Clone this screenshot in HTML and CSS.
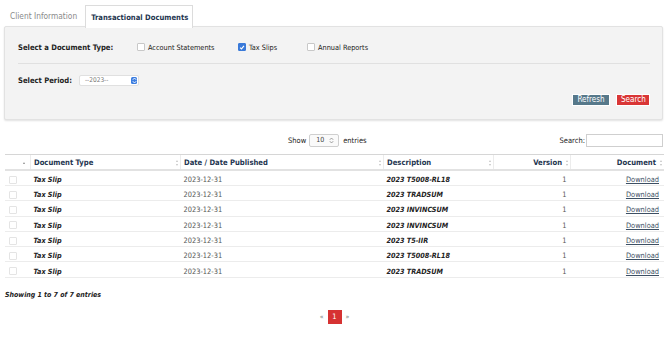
FILE: index.html
```html
<!DOCTYPE html>
<html lang="en">
<head>
    <meta charset="UTF-8">
    <title>Transactional Documents</title>
    <link rel="stylesheet" href="styles.css">
</head>
<body>
    <div class="tabs">
        <div class="tab">Client Information</div>
        <div class="tab active">Transactional Documents</div>
    </div>

    <div class="panel">
        <div class="panel-row">
            <span class="field-label">Select a Document Type:</span>
            <label class="opt opt-first"><span class="box"></span>Account Statements</label>
            <label class="opt opt-tax"><span class="box checked"><svg width="7" height="7" viewBox="0 0 7 7"><path d="M1.3 3.6 L2.9 5.2 L5.8 1.6" fill="none" stroke="#fff" stroke-width="1.3"/></svg></span>Tax Slips</label>
            <label class="opt"><span class="box"></span>Annual Reports</label>
        </div>
        <div class="sep"></div>
        <div class="panel-row">
            <span class="field-label period">Select Period:</span>
            <div class="period-select">--2023--<span class="stepper"><svg width="5" height="7" viewBox="0 0 5 7"><path d="M0.8 2.8 L2.5 1 L4.2 2.8 M0.8 4.2 L2.5 6 L4.2 4.2" fill="none" stroke="#fff" stroke-width="0.9"/></svg></span></div>
        </div>
        <div class="actions">
            <button class="btn btn-refresh">Refresh</button>
            <button class="btn btn-search">Search</button>
        </div>
    </div>

    <div class="table-tools">
        <div class="length">Show <span class="len-select">10<svg width="5" height="7" viewBox="0 0 5 7"><path d="M0.8 2.8 L2.5 1 L4.2 2.8 M0.8 4.2 L2.5 6 L4.2 4.2" fill="none" stroke="#888" stroke-width="0.8"/></svg></span> entries</div>
        <div class="filter">Search:<span class="search-box"></span></div>
    </div>

    <table class="docs">
        <thead>
            <tr>
                <th class="c-check"><span class="sort-up"></span></th>
                <th class="c-type">Document Type<span class="sort"></span></th>
                <th class="c-date">Date / Date Published<span class="sort"></span></th>
                <th class="c-desc">Description<span class="sort"></span></th>
                <th class="c-ver">Version<span class="sort"></span></th>
                <th class="c-doc">Document<span class="sort"></span></th>
            </tr>
        </thead>
        <tbody id="rows"></tbody>
    </table>

    <div class="info">Showing 1 to 7 of 7 entries</div>

    <div class="pager">
        <span class="arrow">«</span>
        <span class="page">1</span>
        <span class="arrow">»</span>
    </div>

<script>
    const docs = ["2023 T5008-RL18", "2023 TRADSUM", "2023 INVINCSUM", "2023 INVINCSUM", "2023 T5-IIR", "2023 T5008-RL18", "2023 TRADSUM"];
    const tbody = document.getElementById("rows");
    docs.forEach(d => {
        const row = document.createElement("tr");
        row.innerHTML =
            '<td class="c-check"><span class="row-box"></span></td>' +
            '<td class="c-type"><b><i>Tax Slip</i></b></td>' +
            '<td class="c-date">2023-12-31</td>' +
            '<td class="c-desc"><b><i>' + d + '</i></b></td>' +
            '<td class="c-ver">1</td>' +
            '<td class="c-doc"><a href="#">Download</a></td>';
        tbody.appendChild(row);
    });
</script>
</body>
</html>
```

FILE: styles.css
```css
body {
    margin: 0;
    padding: 5px 7px 0 4px;
    font-family: "DejaVu Sans Condensed", "DejaVu Sans", sans-serif;
    font-size: 7.5px;
    color: #222;
    background: #fff;
}

.tabs { display: flex; height: 22px; padding-left: 1px; }
.tab {
    display: flex;
    align-items: center;
    padding: 0 6px 0 5px;
    color: #8a8a8a;
    font-size: 8.3px;
    margin-right: 2px;
}
.tab.active {
    color: #1e3550;
    font-weight: bold;
    font-size: 7.6px;
    border: 1px solid #dcdcdc;
    border-bottom: none;
    background: #fff;
    padding: 0 4px 0 5px;
    height: 22px;
    position: relative;
    z-index: 1;
}

.panel {
    background: #f3f3f3;
    border: 1px solid #e2e2e2;
    border-radius: 2px;
    box-shadow: 0 1px 2px rgba(0,0,0,0.12);
    height: 92px;
    padding: 0 12px 0 13px;
    margin-top: -1px;
}
.panel-row { display: flex; align-items: center; height: 18px; padding-top: 11px; }
.field-label { font-weight: bold; font-size: 7.6px; color: #222; width: 119px; }
.field-label.period { width: 61px; }
.opt { display: flex; align-items: center; font-size: 7.3px; color: #222; }
.opt-first { width: 101px; }
.opt-tax { width: 69px; }
.box {
    width: 6px; height: 6px;
    border: 1px solid #c8c8c8;
    border-radius: 1px;
    background: #fff;
    margin-right: 3px;
    display: flex; align-items: center; justify-content: center;
}
.box.checked { background: #3a7ad9; border-color: #3a7ad9; }
.sep { border-top: 1px solid #e0e0e0; margin-top: 7px; }
.panel-row + .sep + .panel-row { padding-top: 7px; }

.period-select {
    height: 9px;
    background: #fff;
    border: 1px solid #e0e0e0;
    border-radius: 2px;
    font-size: 6.5px;
    color: #777;
    display: flex; align-items: center; justify-content: space-between;
    padding-left: 5px;
    width: 53px;
}
.stepper {
    width: 6px; height: 7px;
    background: #3b7de0;
    border-radius: 1.5px;
    display: flex; align-items: center; justify-content: center;
    margin-right: 1px;
}

.actions { display: flex; justify-content: flex-end; gap: 6px; margin-top: 5px; }
.btn {
    font-family: inherit;
    font-size: 8px;
    color: #fff;
    border: 1px solid #fff;
    height: 12px;
    padding: 0 4px;
    line-height: 10px;
    cursor: pointer;
}
.btn-refresh { background: #56788a; width: 38px; }
.btn-search { background: #d93636; width: 34px; }

.table-tools {
    display: flex;
    justify-content: flex-end;
    align-items: center;
    margin-top: 13px;
    height: 14px;
    font-size: 7.5px;
    color: #222;
}
.length { display: flex; align-items: center; margin-right: 193px; }
.len-select {
    box-sizing: border-box;
    width: 30px; height: 13px;
    border: 1px solid #cfcfcf;
    border-radius: 2px;
    margin: 0 4px 0 3px;
    display: inline-flex; align-items: center; justify-content: space-between;
    padding: 0 4px 0 6px;
    font-size: 7px;
    color: #444;
    background: #fafafa;
}
.filter { display: flex; align-items: center; }
.search-box {
    box-sizing: border-box;
    width: 77px; height: 13px;
    border: 1px solid #cfcfcf;
    background: #fff;
    margin-left: 1px;
}

.docs {
    width: 659px;
    margin-top: 7px;
    margin-left: 1px;
    border-collapse: collapse;
    font-size: 7.4px;
}
.docs th {
    height: 14px;
    padding: 0 3px;
    text-align: left;
    color: #1e3550;
    font-weight: bold;
    font-size: 7.6px;
    border-top: 1px solid #d6d6d6;
    border-bottom: 2px solid #e2e2e2;
    border-left: 1px solid #ececec;
    position: relative;
}
.docs th:first-child { border-left: none; }
.docs td {
    box-sizing: border-box;
    height: 15.3px;
    padding: 3px 3px 0 3px;
    border-bottom: 1px solid #ececec;
    color: #555;
    line-height: 11px;
}
.docs td b { color: #222; font-size: 7.2px; }
.c-check { width: 19px; }
.c-type { width: 143px; }
.c-date { width: 196px; }
.c-desc { width: 103px; }
.c-ver { width: 65px; }
.docs .c-ver, .docs .c-doc { text-align: right; }
.docs th.c-ver, .docs th.c-doc { padding-right: 8px; }
.docs td.c-ver { padding-right: 4px; }
.docs td.c-doc { padding-right: 5px; }

.sort {
    position: absolute;
    right: 3px;
    top: 5px;
    width: 0; height: 6px;
}
.sort::before, .sort::after {
    content: "";
    position: absolute;
    left: -1.5px;
    border-left: 1.5px solid transparent;
    border-right: 1.5px solid transparent;
}
.sort::before { top: 0; border-bottom: 2px solid #c2c2c2; }
.sort::after { bottom: 0; border-top: 2px solid #c2c2c2; }
.sort-up {
    position: absolute;
    right: 5px;
    top: 7px;
    border-left: 1.5px solid transparent;
    border-right: 1.5px solid transparent;
    border-bottom: 2px solid #8a8a8a;
}

.row-box {
    display: block;
    width: 6px; height: 6px;
    border: 1px solid #e4e4e4;
    border-radius: 1px;
    margin-left: 1px;
}
.docs a { color: #3d4f63; text-decoration: underline; font-size: 7.4px; }

.info {
    margin-top: 13px;
    margin-left: 1px;
    font-weight: bold;
    font-style: italic;
    font-size: 7px;
    color: #222;
}
.pager {
    display: flex;
    justify-content: center;
    align-items: center;
    gap: 4px;
    margin-top: 11px;
    padding-left: 2px;
}
.arrow { color: #777; font-size: 7px; }
.page {
    width: 14px; height: 14px;
    background: #d63232;
    color: #fff;
    font-size: 7.5px;
    display: flex; align-items: center; justify-content: center;
}
```
